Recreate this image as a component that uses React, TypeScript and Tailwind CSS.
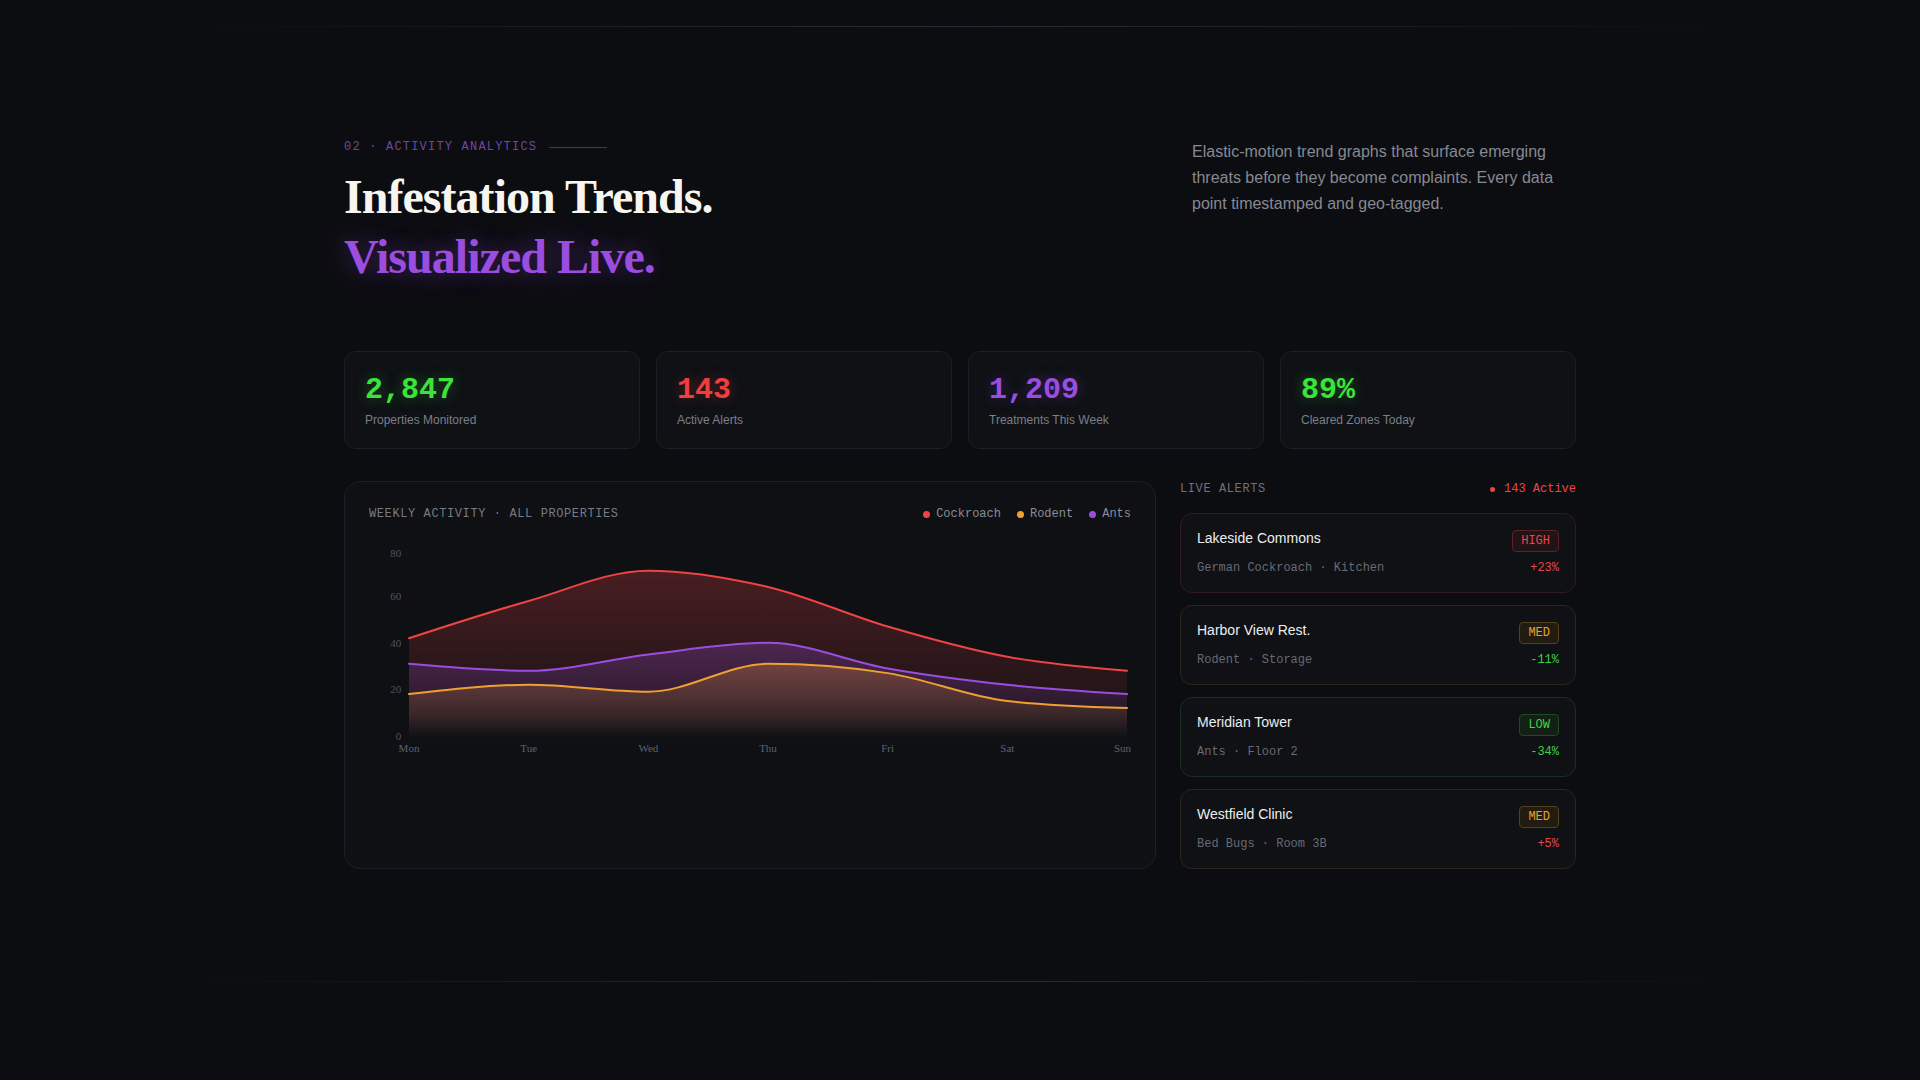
import React from 'react';

type Series = { name: string; color: string; values: number[] };

const series: Series[] = [
    { name: 'Cockroach', color: '#ef4444', values: [42, 58, 71, 64, 47, 34, 28] },
    { name: 'Rodent', color: '#f0a030', values: [18, 22, 19, 31, 27, 15, 12] },
    { name: 'Ants', color: '#9b4de0', values: [31, 28, 35, 40, 29, 22, 18] },
];

const days = ['Mon', 'Tue', 'Wed', 'Thu', 'Fri', 'Sat', 'Sun'];

const stats = [
    { value: '2,847', label: 'Properties Monitored', color: 'text-[#3de23a] [text-shadow:0_0_14px_rgba(61,226,58,0.35)]' },
    { value: '143', label: 'Active Alerts', color: 'text-[#f03e3e] [text-shadow:0_0_14px_rgba(240,62,62,0.35)]' },
    { value: '1,209', label: 'Treatments This Week', color: 'text-[#9b4de0] [text-shadow:0_0_14px_rgba(155,77,224,0.35)]' },
    { value: '89%', label: 'Cleared Zones Today', color: 'text-[#3de23a] [text-shadow:0_0_14px_rgba(61,226,58,0.35)]' },
];

const alerts = [
    {
        site: 'Lakeside Commons',
        detail: 'German Cockroach · Kitchen',
        level: 'HIGH',
        change: '+23%',
        card: 'border-[#34191e]',
        badge: 'border-[#5a2228] bg-[#231316] text-[#e5484d]',
        changeColor: 'text-[#e5484d]',
    },
    {
        site: 'Harbor View Rest.',
        detail: 'Rodent · Storage',
        level: 'MED',
        change: '-11%',
        card: 'border-[#2c2519]',
        badge: 'border-[#54401c] bg-[#221b10] text-[#e8a030]',
        changeColor: 'text-[#3fcf45]',
    },
    {
        site: 'Meridian Tower',
        detail: 'Ants · Floor 2',
        level: 'LOW',
        change: '-34%',
        card: 'border-[#1b2e1f]',
        badge: 'border-[#1f4a24] bg-[#122016] text-[#3fd64a]',
        changeColor: 'text-[#3fcf45]',
    },
    {
        site: 'Westfield Clinic',
        detail: 'Bed Bugs · Room 3B',
        level: 'MED',
        change: '+5%',
        card: 'border-[#2c2519]',
        badge: 'border-[#54401c] bg-[#221b10] text-[#e8a030]',
        changeColor: 'text-[#e5484d]',
    },
];

// chart geometry (svg units)
const X0 = 40;
const STEP = 119.67;
const BASE = 206;
const SCALE = 2.329;
const px = (i: number) => X0 + i * STEP;
const py = (v: number) => BASE - v * SCALE;

// monotone cubic interpolation, same idea as d3.curveMonotoneX
function monotonePath(values: number[]) {
    const pts = values.map((v, i) => [px(i), py(v)]);
    const n = pts.length;
    const slopes: number[] = new Array(n).fill(0);
    const sign = (x: number) => (x < 0 ? -1 : 1);
    for (let i = 1; i < n - 1; i++) {
        const h0 = pts[i][0] - pts[i - 1][0];
        const h1 = pts[i + 1][0] - pts[i][0];
        const s0 = (pts[i][1] - pts[i - 1][1]) / h0;
        const s1 = (pts[i + 1][1] - pts[i][1]) / h1;
        const p = (s0 * h1 + s1 * h0) / (h0 + h1);
        slopes[i] = (sign(s0) + sign(s1)) * Math.min(Math.abs(s0), Math.abs(s1), 0.5 * Math.abs(p)) || 0;
    }
    const h = pts[1][0] - pts[0][0];
    slopes[0] = (3 * (pts[1][1] - pts[0][1]) / h - slopes[1]) / 2;
    const hl = pts[n - 1][0] - pts[n - 2][0];
    slopes[n - 1] = (3 * (pts[n - 1][1] - pts[n - 2][1]) / hl - slopes[n - 2]) / 2;

    let d = `M${pts[0][0]},${pts[0][1]}`;
    for (let i = 0; i < n - 1; i++) {
        const dx = (pts[i + 1][0] - pts[i][0]) / 3;
        d += ` C${pts[i][0] + dx},${pts[i][1] + dx * slopes[i]} ${pts[i + 1][0] - dx},${pts[i + 1][1] - dx * slopes[i + 1]} ${pts[i + 1][0]},${pts[i + 1][1]}`;
    }
    return d;
}

function TrendChart() {
    // draw order: cockroach behind, ants, rodent on top
    const order = [series[0], series[2], series[1]];
    const yTicks = [
        { v: 80, y: 27.3 },
        { v: 60, y: 70 },
        { v: 40, y: 116.6 },
        { v: 20, y: 163.2 },
        { v: 0, y: 209.7 },
    ];
    return (
        <svg viewBox="0 0 762 232" className="mt-2 block h-[232px] w-full">
            <defs>
                {order.map((s) => (
                    <linearGradient key={s.name} id={`fill-${s.name}`} x1="0" y1="0" x2="0" y2="1">
                        <stop offset="0%" stopColor={s.color} stopOpacity={0.26} />
                        <stop offset="70%" stopColor={s.color} stopOpacity={0.1} />
                        <stop offset="100%" stopColor={s.color} stopOpacity={0} />
                    </linearGradient>
                ))}
            </defs>

            {yTicks.map((t) => (
                <text
                    key={t.v}
                    x={32.2}
                    y={t.y}
                    textAnchor="end"
                    fontSize={11}
                    fill="#50545c"
                    fontFamily="'Liberation Serif', serif"
                >
                    {t.v}
                </text>
            ))}

            {order.map((s) => {
                const line = monotonePath(s.values);
                const area = `${line} L${px(6)},${BASE + 2} L${px(0)},${BASE + 2} Z`;
                return (
                    <g key={s.name}>
                        <path d={area} fill={`url(#fill-${s.name})`} />
                        <path d={line} fill="none" stroke={s.color} strokeWidth={2} strokeLinecap="round" />
                    </g>
                );
            })}

            {days.map((d, i) => (
                <text
                    key={d}
                    x={i === 6 ? 762 : px(i)}
                    y={222}
                    textAnchor={i === 6 ? 'end' : 'middle'}
                    fontSize={11}
                    fill="#5e626a"
                    fontFamily="'Liberation Serif', serif"
                >
                    {d}
                </text>
            ))}
        </svg>
    );
}

export default function App() {
    return (
        <div className="min-h-screen bg-[#0c0d11] pt-[26px] font-['Liberation_Sans',sans-serif]">
            <div className="mx-auto h-px max-w-[1540px] bg-linear-to-r from-transparent via-[#2b2d34] to-transparent" />

            <section className="mx-auto max-w-[1232px] py-28">
                {/* Header */}
                <div className="flex items-start justify-between">
                    <div>
                        <div className="flex h-4 items-center gap-3 font-['Liberation_Mono',monospace] text-[12px] leading-4 tracking-widest text-[#6f45a8]">
                            <span>02 · ACTIVITY ANALYTICS</span>
                            <span className="h-px w-[58px] bg-[#4a2f73]" />
                        </div>
                        <h2 className="mt-3 font-['Liberation_Serif',serif] text-[48px] font-bold leading-[60px] tracking-[-0.02em]">
                            <span className="block text-[#f6f5f0]">Infestation Trends.</span>
                            <span className="block text-[#9b4de0] [text-shadow:0_0_26px_rgba(155,77,224,0.45)]">
                                Visualized Live.
                            </span>
                        </h2>
                    </div>
                    <p className="max-w-sm text-[16px] leading-[26px] text-[#868991]">
                        Elastic-motion trend graphs that surface emerging threats before they become complaints. Every data point timestamped and geo-tagged.
                    </p>
                </div>

                {/* Stats */}
                <div className="mt-16 grid grid-cols-4 gap-4">
                    {stats.map((s) => (
                        <div key={s.label} className="rounded-xl border border-[#1c1f25] bg-[#0f1115] p-5">
                            <div className={`font-['Liberation_Mono',monospace] text-[30px] font-bold leading-[1.2] ${s.color}`}>
                                {s.value}
                            </div>
                            <div className="mt-1 text-[12px] leading-4 text-[#7b7f87]">{s.label}</div>
                        </div>
                    ))}
                </div>

                {/* Chart + alerts */}
                <div className="mt-8 grid grid-cols-[1fr_396px] gap-6">
                    <div className="rounded-2xl border border-[#1c1f25] bg-[#0e1014] p-6">
                        <div className="flex h-4 items-center justify-between font-['Liberation_Mono',monospace] text-[12px] leading-4">
                            <span className="tracking-wider text-[#777b83]">WEEKLY ACTIVITY · ALL PROPERTIES</span>
                            <div className="flex items-center gap-4 text-[#8a8d94]">
                                {series.map((s) => (
                                    <span key={s.name} className="flex items-center gap-[6px]">
                                        <span className="h-[7px] w-[7px] rounded-full" style={{ backgroundColor: s.color }} />
                                        {s.name}
                                    </span>
                                ))}
                            </div>
                        </div>
                        <TrendChart />
                    </div>

                    <div className="flex flex-col">
                        <div className="mb-4 flex h-4 items-center justify-between font-['Liberation_Mono',monospace] text-[12px] leading-4">
                            <span className="tracking-wider text-[#6e7179]">LIVE ALERTS</span>
                            <span className="flex items-center gap-[9px] text-[#ef4444]">
                                <span className="h-[5px] w-[5px] rounded-full bg-[#ef4444]" />
                                143 Active
                            </span>
                        </div>
                        <div className="flex flex-col gap-3">
                            {alerts.map((a) => (
                                <div key={a.site} className={`rounded-xl border bg-[#0f1115] p-4 ${a.card}`}>
                                    <div className="flex items-start justify-between">
                                        <span className="text-[14px] leading-4 text-[#ecedef]">{a.site}</span>
                                        <span
                                            className={`flex h-[22px] items-center rounded border px-2 font-['Liberation_Mono',monospace] text-[12px] ${a.badge}`}
                                        >
                                            {a.level}
                                        </span>
                                    </div>
                                    <div className="mt-2 flex items-center justify-between font-['Liberation_Mono',monospace] text-[12px] leading-4">
                                        <span className="text-[#676a72]">{a.detail}</span>
                                        <span className={a.changeColor}>{a.change}</span>
                                    </div>
                                </div>
                            ))}
                        </div>
                    </div>
                </div>
            </section>

            <div className="mx-auto h-px max-w-[1560px] bg-linear-to-r from-transparent via-[#2b2d34] to-transparent" />
        </div>
    );
}
